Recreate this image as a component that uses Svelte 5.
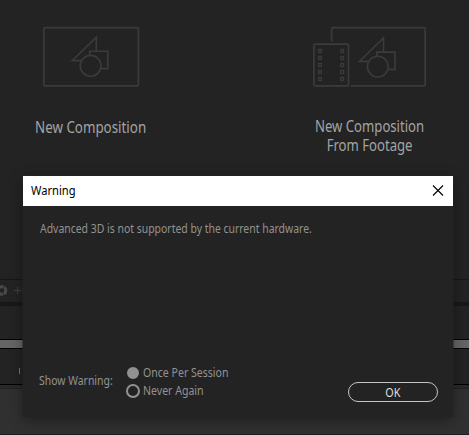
<script>
  let choice = $state("once");
  let open = $state(true);

  const holes = [25, 32, 39, 46, 53];
  const options = [
    { id: "once", label: "Once Per Session" },
    { id: "never", label: "Never Again" },
  ];
</script>

{#snippet shapes(x, y)}
  <g transform="translate({x} {y})">
    <path d="M10.500 25H1.200L25.300 1.500V15.500" />
    <path d="M18.700 19.700V15.700H36.800V33H30.300" />
    <circle cx="19.600" cy="30.200" r="10.400" />
  </g>
{/snippet}

<main>
  <section class="start">
    <button class="comp">
      <svg width="97" height="62" viewBox="0 0 97 62">
        <rect x="0.900" y="1.700" width="94.500" height="58.200" rx="1.500" />
        {@render shapes(28, 9.6)}
      </svg>
      <span class="caption">New Composition</span>
    </button>
    <button class="comp footage">
      <svg width="116" height="62" viewBox="0 0 116 62">
        <path d="M19.600 15.500V3.200Q19.600 1.700 21.100 1.700H111.700Q113.200 1.700 113.200 3.200V58.400Q113.200 59.900 111.700 59.900H38.500" />
        <rect x="1.900" y="18.100" width="34.600" height="41.800" rx="1.500" />
        {#each holes as y}
          <rect class="hole" x="6.500" y={y - 1.5} width="3" height="3" rx="0.500" />
          <rect class="hole" x="28.700" y={y - 1.5} width="3" height="3" rx="0.500" />
        {/each}
        {@render shapes(46.2, 10.4)}
      </svg>
      <span class="caption">New Composition<br />From Footage</span>
    </button>
  </section>

  <section class="timeline">
    <div class="tools">
      <svg width="25" height="22" viewBox="0 0 25 22">
        <circle cx="2" cy="10.500" r="3.800" stroke="#4a4a4a" stroke-width="3" stroke-dasharray="4.200 0.700" />
        <path d="M14 10.500h7M17.500 7v7" stroke="#414141" />
        <path d="M24.500 7q-3 3.500 0 7" stroke="#353535" stroke-width="2" />
      </svg>
    </div>
    <div class="gap"></div>
    <div class="ruler"></div>
    <div class="workarea"></div>
    <div class="track"><i></i></div>
    <div class="layers"></div>
  </section>

  {#if open}
    <div class="dialog" role="dialog" aria-label="Warning">
      <header>
        <span class="title">Warning</span>
        <button class="close" aria-label="Close" onclick={() => (open = false)}>
          <svg width="12" height="12" viewBox="0 0 12 12"><path d="M1 .5l10 10M11 .5L1 10.500" /></svg>
        </button>
      </header>
      <p><span class="message">Advanced 3D is not supported by the current hardware.</span></p>
      <footer>
        <span class="label">Show Warning:</span>
        <div class="options">
          {#each options as option}
            <button class="option" onclick={() => (choice = option.id)}>
              <i class:selected={choice === option.id}></i>
              <span>{option.label}</span>
            </button>
          {/each}
        </div>
        <button class="ok" onclick={() => (open = false)}><span>OK</span></button>
      </footer>
    </div>
  {/if}
</main>

<style>
  :global(body) {
    margin: 0;
    background: #232323;
  }
  main {
    position: relative;
    width: 469px;
    height: 435px;
    overflow: hidden;
    background: #232323;
    color: #929292;
    font: 12px/18px "Noto Sans", sans-serif;
  }
  button {
    padding: 0;
    border: 0;
    background: none;
    color: inherit;
    font: inherit;
  }
  span {
    display: inline-block;
    white-space: nowrap;
  }
  svg {
    display: block;
    fill: none;
  }

  .start {
    display: flex;
    justify-content: space-between;
    height: 279px;
    box-sizing: border-box;
    padding: 26px 28px 0 20px;
  }
  .comp {
    display: flex;
    flex-direction: column;
    align-items: center;
    align-self: flex-start;
    width: 142px;
    color: #a4a4a4;
    font-size: 16px;
    line-height: 19px;
  }
  .comp svg {
    margin-bottom: 30px;
    stroke: #3b3b3b;
    stroke-width: 1.7;
  }
  .comp g {
    stroke-width: 1.6;
  }
  .comp .hole {
    stroke-width: 1.3;
  }
  .caption {
    transform: scaleX(0.835);
  }
  .footage svg {
    margin-bottom: 29px;
  }
  .footage .caption {
    transform: scaleX(0.82);
  }

  .tools {
    height: 23px;
    box-sizing: border-box;
    border-top: 1px solid #171717;
  }
  .gap {
    height: 4px;
    background: #181818;
  }
  .ruler {
    height: 33px;
  }
  .workarea {
    height: 8px;
    border: solid #000;
    border-width: 1px 0;
    background: #656565;
  }
  .track {
    display: flex;
    align-items: center;
    height: 35px;
    padding-left: 19px;
    border-bottom: 1px solid #000;
  }
  .track i {
    width: 1px;
    height: 6px;
    margin-top: 9px;
    background: #777;
  }
  .layers {
    height: 46px;
    border-top: 3px solid #292929;
    border-bottom: 1px solid #211c1f;
    background: #303030;
    box-shadow: inset 0 1px #222;
  }

  .dialog {
    position: absolute;
    left: 23px;
    top: 176px;
    display: flex;
    flex-direction: column;
    width: 430px;
    height: 241px;
    background: #232323;
    box-shadow: 0 3px 13px rgb(0 0 0 / 38%), 0 0 0 1px rgb(43 43 43 / 50%);
  }
  header {
    display: flex;
    align-items: center;
    justify-content: space-between;
    height: 30px;
    box-sizing: border-box;
    padding: 0 9px 0 8px;
    background: #fff;
    color: #000;
  }
  .title,
  .message,
  .label,
  .option span {
    transform: scaleX(0.87);
    transform-origin: left;
  }
  .title {
    transform: scaleX(0.93);
  }
  .option span {
    transform: scaleX(0.88);
  }
  .close path {
    stroke: #000;
    stroke-width: 1.1;
  }
  p {
    flex: 1;
    margin: 0;
    padding: 14px 17px;
  }
  footer {
    display: flex;
    height: 60px;
    padding-left: 16px;
  }
  .label {
    width: 86px;
    padding-top: 15px;
  }
  .options {
    width: 206px;
    padding-top: 7px;
  }
  .option {
    display: flex;
    align-items: center;
    gap: 3.5px;
    height: 18px;
    padding-left: 0.5px;
  }
  .option i {
    width: 14px;
    height: 14px;
    box-sizing: border-box;
    border: 2px solid #929292;
    border-radius: 50%;
  }
  .option .selected {
    width: 12px;
    height: 12px;
    margin: 0 1px;
    background: #929292;
  }
  .ok {
    width: 90px;
    height: 20px;
    margin-top: 25px;
    margin-left: 17px;
    border: 1px solid #c4c4c4;
    border-radius: 10px;
    color: #dedede;
    line-height: 17px;
  }
  .ok span {
    transform: translateX(-0.5px) scaleX(0.9);
  }
</style>
